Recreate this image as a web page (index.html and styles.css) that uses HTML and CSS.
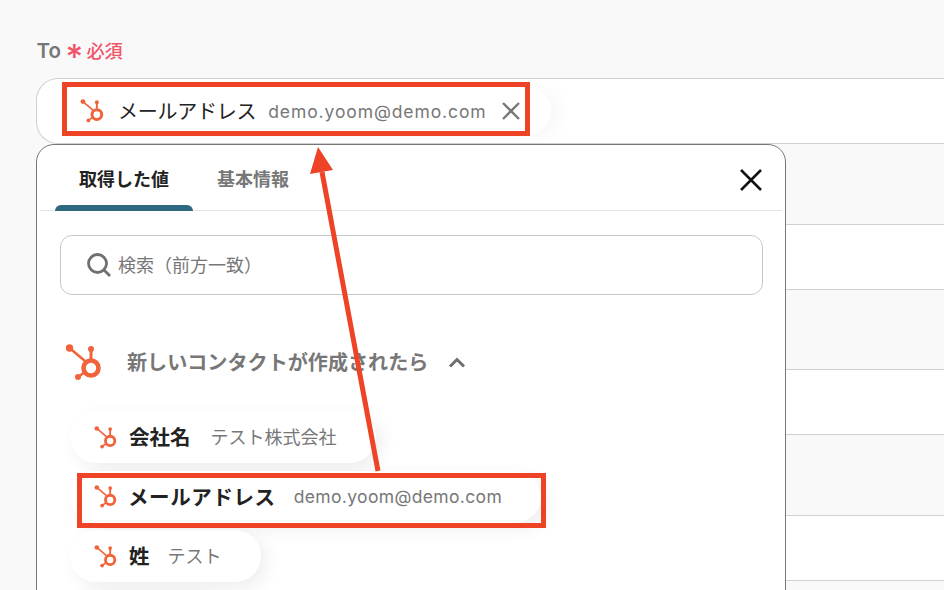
FILE: index.html
```html
<!DOCTYPE html>
<html lang="ja">
<head>
<meta charset="utf-8">
<title>To</title>
<link rel="stylesheet" href="styles.css">
</head>
<body>
<svg class="defs" width="0" height="0" aria-hidden="true">
  <symbol id="hs" viewBox="0 0 37 37">
    <g fill="#f1633a" stroke="none">
      <circle cx="4.5" cy="4" r="3.7"/>
      <circle cx="26" cy="5" r="3"/>
      <circle cx="13" cy="33" r="3"/>
    </g>
    <g fill="none" stroke="#f1633a">
      <path d="M4.5 4 20 17" stroke-width="2.6"/>
      <path d="M26 5V15" stroke-width="3"/>
      <path d="M13 33 20 28" stroke-width="2.6"/>
      <circle cx="26" cy="24" r="7.5" stroke-width="4.6"/>
    </g>
  </symbol>
</svg>
<main class="page">
  <header class="label-row">
    <span class="label">To</span>
    <span class="req-star">*</span>
    <span class="req-text">必須</span>
  </header>
  <div class="row white field">
    <div class="input-chip">
      <svg class="hs-in"><use href="#hs"/></svg>
      <span class="input-name">メールアドレス</span>
      <span class="input-val">demo.yoom@demo.com</span>
      <svg class="chip-x" viewBox="0 0 18 18"><path d="M1 1 17 17M17 1 1 17"/></svg>
    </div>
  </div>
  <div class="row gray tall"></div>
  <div class="row white"></div>
  <div class="row gray tall"></div>
  <div class="row white"></div>
  <div class="row gray tall"></div>
  <div class="row white"></div>
  <div class="row gray last"></div>
</main>

<section class="popup">
  <div class="tabs">
    <div class="tab active">取得した値</div>
    <div class="tab">基本情報</div>
    <svg class="close" viewBox="0 0 22 22"><path d="M1 1 21 21M21 1 1 21"/></svg>
  </div>
  <div class="search">
    <svg class="search-ico" viewBox="0 0 24 24"><circle cx="10.5" cy="10.5" r="9"/><path d="M17 17 23 23"/></svg>
    <span class="search-text">検索（前方一致）</span>
  </div>
  <div class="section">
    <svg class="hs-lg"><use href="#hs"/></svg>
    <span class="section-title">新しいコンタクトが作成されたら</span>
    <svg class="chev" viewBox="0 0 18 11"><path d="M2 9.500 9 2.500 16 9.500"/></svg>
  </div>
  <div class="chips">
    <div class="chip"><svg class="hs-sm"><use href="#hs"/></svg><b>会社名</b><span>テスト株式会社</span></div>
    <div class="chip"><svg class="hs-sm"><use href="#hs"/></svg><b class="wide">メールアドレス</b><span class="mail">demo.yoom@demo.com</span></div>
    <div class="chip"><svg class="hs-sm"><use href="#hs"/></svg><b>姓</b><span class="short">テスト</span></div>
    <div class="chip"></div>
  </div>
</section>

<div class="mark mark-top"></div>
<div class="mark mark-bottom"></div>
<svg class="arrow" width="944" height="590" viewBox="0 0 944 590">
  <path class="arrow-line" d="M378 471 322 172"/>
  <path class="arrow-head" d="M318 147 333 170 310 174Z"/>
</svg>
</body>
</html>
```
FILE: styles.css
```css
* { box-sizing: border-box; }
html, body { margin: 0; height: 590px; overflow: hidden; }
body {
  position: relative;
  background: #f9f9fa;
  font-family: Inter, "Noto Sans CJK JP", sans-serif;
  color: #222;
}
.defs { position: absolute; }
.page { display: flex; flex-direction: column; }
.label-row {
  height: 78px;
  padding: 39px 0 0 36.500px;
  display: flex;
  align-items: flex-start;
  line-height: 24px;
}
.label { font-size: 20.500px; font-weight: 600; color: #777; }
.req-star { margin-left: 4.500px; font-size: 34px; font-weight: 500; color: #f0566a; line-height: 36px; width: 21px; }
.req-text { font-size: 18.200px; font-weight: 500; color: #f0566a; }
.row { flex: none; border-bottom: 1px solid #cdd2d6; margin-left: 36px; }
.white { height: 65px; background: #fff; }
.gray { background: #f9f9fa; }
.tall { height: 80.600px; }
.last { height: 20px; border-bottom: 0; }
.field {
  height: 66px;
  border: 1px solid #cdd2d6;
  border-right: 0;
  border-radius: 22px 0 0 22px;
  padding: 8px 0 0 14px;
}
.input-chip {
  display: flex;
  align-items: center;
  width: 500px;
  height: 48px;
  border-radius: 24px;
  background: #fff;
  box-shadow: 8px 2px 20px rgba(0, 0, 0, .035);
  padding-left: 29px;
}
.hs-in { width: 24px; height: 24px; flex: none; }
.input-name { margin-left: 14px; padding-bottom: 1px; font-size: 20px; color: #222; letter-spacing: -.25px; white-space: nowrap; }
.input-val { margin-left: 12px; font-size: 17.500px; color: #777; letter-spacing: .9px; white-space: nowrap; }
.chip-x { width: 18px; height: 18px; margin-left: 15px; flex: none; fill: none; stroke: #777; stroke-width: 2.400; }

.popup {
  position: absolute;
  left: 36px;
  top: 144px;
  width: 750px;
  height: 470px;
  background: #fff;
  border: 1px solid #777;
  border-radius: 18px;
  padding: 0 22px 0 23px;
}
.tabs {
  position: relative;
  height: 66px;
  margin: 0 -19px 0 -20px;
  padding-left: 15px;
  border-bottom: 1px solid #e2e3e5;
  display: flex;
}
.tab {
  position: relative;
  width: 138px;
  height: 66px;
  padding-top: 21px;
  text-align: center;
  font-size: 18px;
  line-height: 28px;
  font-weight: 700;
  color: #777;
}
.tab + .tab { width: 120px; }
.active { color: #222; }
.active::after {
  content: "";
  position: absolute;
  left: 0;
  right: 0;
  bottom: 0;
  height: 6px;
  background: #2e6780;
  border-radius: 6px 6px 0 0;
}
.close { position: absolute; right: 20px; top: 24px; width: 22px; height: 22px; fill: none; stroke: #111; stroke-width: 2.500; }
.search {
  margin-top: 24px;
  width: 703px;
  height: 60px;
  border: 1px solid #c9c9c9;
  border-radius: 12px;
  padding-left: 26px;
  display: flex;
  align-items: center;
  font-size: 18px;
  color: #777;
}
.search-text { padding-bottom: 2px; }
.search-ico { width: 24px; height: 24px; margin-right: 7px; fill: none; stroke: #6f6f6f; stroke-width: 2.800; flex: none; }
.section { display: flex; align-items: center; height: 38px; margin: 48px 0 30px 5px; }
.hs-lg { width: 37px; height: 37px; flex: none; }
.section-title { margin-left: 25px; padding-bottom: 2px; font-size: 20.100px; font-weight: 700; color: #777; white-space: nowrap; }
.chev { width: 18px; height: 11px; margin-left: 20px; fill: none; stroke: #6f6f6f; stroke-width: 3; flex: none; }
.chips { display: flex; flex-direction: column; align-items: flex-start; gap: 7.500px; margin-left: 10px; }
.chip {
  display: flex;
  align-items: center;
  height: 52px;
  min-width: 160px;
  padding: 0 39px 0 24px;
  border-radius: 26px;
  background: #fff;
  box-shadow: 6px 6px 18px rgba(0, 0, 0, .07);
  white-space: nowrap;
}
.hs-sm { width: 23px; height: 23px; flex: none; margin-right: 12px; }
.chip b { padding-bottom: 2px; font-size: 20.500px; font-weight: 700; color: #222; }
.chip b.wide { margin-left: -1px; letter-spacing: .6px; }
.chip span { margin-left: 20px; padding-bottom: 2px; font-size: 18px; color: #777; }
.chip .short { margin-left: 18px; }
.chip .mail { margin-left: 18px; padding-bottom: 0; font-size: 17.500px; letter-spacing: .35px; }

.mark { position: absolute; border: 5px solid #ee4327; }
.mark-top { left: 62px; top: 82px; width: 468px; height: 54px; }
.mark-bottom { left: 77px; top: 473px; width: 469px; height: 55px; }
.arrow { position: absolute; left: 0; top: 0; pointer-events: none; }
.arrow-line { stroke: #ee4327; stroke-width: 5; fill: none; }
.arrow-head { fill: #ee4327; }
```
